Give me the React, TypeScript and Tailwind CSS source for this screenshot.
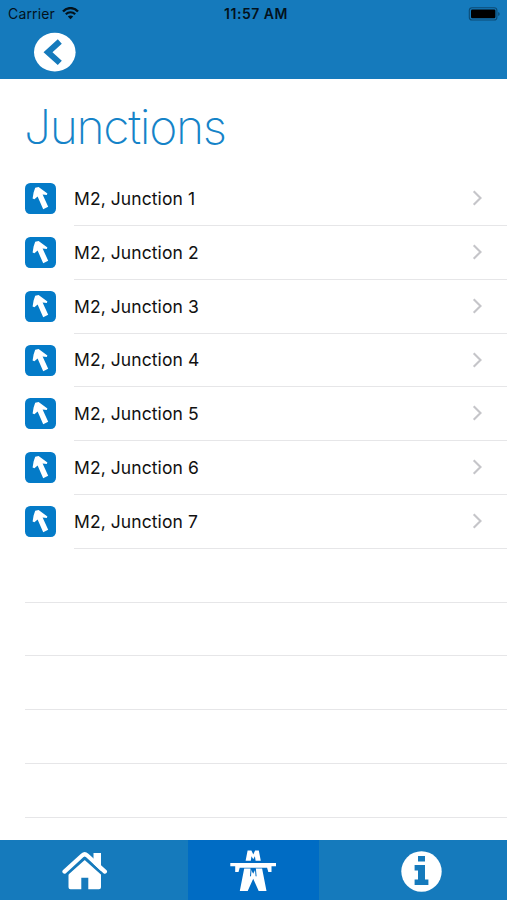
const junctions = [1, 2, 3, 4, 5, 6, 7];
const emptyRows = [1, 2, 3, 4, 5];

function StatusBar() {
  return (
    <div className="flex h-7 items-center pl-2 text-[#03121c]">
      <div className="flex flex-1 items-center">
        <span className="w-[48px] whitespace-nowrap text-[14px] leading-7 tracking-[0.15px]">Carrier</span>
        <svg className="ml-[6px] mt-[-1px]" width="17" height="13" viewBox="0 0 17 13" fill="none" stroke="#03121c">
          <path d="M1 4.5C5-.1 12-.1 16 4.5" strokeWidth="2.3" />
          <path d="M3.8 7.3c2.6-2.8 6.8-2.8 9.4 0" strokeWidth="2.1" />
          <path d="M8.5 12.2 5.8 9.5c1.5-1.4 3.9-1.4 5.4 0z" fill="#03121c" stroke="none" />
        </svg>
      </div>
      <span className="ml-[3px] whitespace-nowrap text-[14px] font-semibold leading-7 tracking-[0.5px]">11:57 AM</span>
      <div className="flex flex-1 justify-end pr-[6px]">
        <svg className="mt-[-1px]" width="33" height="14" viewBox="0 0 33 14">
          <rect x="1.3" y=".8" width="27.6" height="12.2" rx="2.8" fill="none" stroke="#0c4b74" strokeWidth="1.1" />
          <rect x="3" y="2.5" width="24.4" height="8.8" rx="1.2" fill="#000" />
          <path d="M30.2 5v4q1.5-.7 1.5-2t-1.5-2z" fill="#0c4b74" />
        </svg>
      </div>
    </div>
  );
}

function Header() {
  return (
    <header className="h-[79px] shrink-0 bg-[#157abc]">
      <StatusBar />
      <button className="ml-[34px] mt-1 block" aria-label="Back">
        <svg width="42" height="40" viewBox="0 0 42 40">
          <ellipse cx="20.8" cy="20.2" rx="20.8" ry="19.4" fill="#fff" />
          <path d="M25.8 9.6 14 20.2l11.8 10.7" fill="none" stroke="#157abc" strokeWidth="6" />
        </svg>
      </button>
    </header>
  );
}

function JunctionIcon() {
  return (
    <svg className="mr-[18px] shrink-0" width="31" height="31" viewBox="0 0 31 31">
      <rect width="31" height="31" rx="5.2" fill="#047bc8" />
      <path d="M10.2 4.8 13.6 4 22.4 10.4 21.8 12 17.6 11.4 23.2 23.8 18.2 26.2 12.6 13.6 9.4 16.2 7.6 15.6 8.6 9.6z" fill="#fff" />
    </svg>
  );
}

function Chevron() {
  return (
    <svg className="mr-[24px] mt-[-1px]" width="11" height="16" viewBox="0 0 11 16" fill="none">
      <path d="M1.7 1.3 8.5 8l-6.8 6.7" stroke="#c5c5c9" strokeWidth="2.1" />
    </svg>
  );
}

function HomeIcon() {
  return (
    <svg width="46" height="38" viewBox="0 0 46 38" fill="#fff">
      <path d="M31.5 1H39v18l-7.5-7z" />
      <path d="M6.5 21.5 22.7 6.8l16.3 14.7v13.8q0 2-2 2H26.3V25.7h-7v11.6H8.5q-2 0-2-2z" />
      <path d="M4.5 22.6 22.7 6.2l18.2 16.4" fill="none" stroke="#157abc" strokeWidth="2.6" />
      <path d="M2.5 19.6 20.4 3.3q2.3-2 4.6 0l17.9 16.3" fill="none" stroke="#fff" strokeWidth="4.2" strokeLinecap="round" />
    </svg>
  );
}

function MotorwayIcon() {
  return (
    <svg width="46" height="42" viewBox="0 0 46 42" fill="#fff">
      <path d="M17.6.5h3.8l1.9 4 1.8-4h3.7l2 10.2h-5.2l-.7-4.5-1.6 3.1-1.8-3.1-.7 4.5h-5.2z" />
      <path d="M.3 13H46v3.2h-4.5V22h-3.2l-1.2-4.3H9.7L8.5 22H5.2v-5.8H.3z" />
      <path d="M14.2 18.5h6.2l2.8 5.3 2.6-5.3h6.3L36.5 41h-7.8l-5.5-12.3L17.7 41H9.8z" />
      <path d="m21.1 18.7-.6 7.6M25.4 18.7l.7 7.6" fill="none" stroke="#006cc4" strokeWidth="1" />
    </svg>
  );
}

function InfoIcon() {
  return (
    <svg width="41" height="41" viewBox="0 0 41 41">
      <circle cx="20.5" cy="20.5" r="20.2" fill="#fff" />
      <path d="M17 5h7v5.6h-7zM13.6 14H24v14.5h3.4V34H13.6v-5.5H17v-9h-3.4z" fill="#157abc" />
    </svg>
  );
}

export default function App() {
  return (
    <div className="flex h-[900px] w-full flex-col overflow-hidden bg-white font-['Inter',sans-serif]">
      <Header />
      <main className="min-h-0 flex-1 overflow-hidden">
        <h1 className="h-[93.4px] pl-[24px] pt-[22px] text-[48px] font-extralight leading-[52px] tracking-[-1.35px] text-[#1583c8]">
          Junctions
        </h1>
        <ul>
          {junctions.map((n) => (
            <li key={n} className="flex h-[53.77px] pl-[25px]">
              <div className="flex items-center pb-[1px]">
                <JunctionIcon />
              </div>
              <div className="flex flex-1 items-center justify-between border-b border-[#e6e6e8]">
                <span className="pt-[1px] text-[17.5px] tracking-[0.08px] text-[#111]">M2, Junction {n}</span>
                <Chevron />
              </div>
            </li>
          ))}
          {emptyRows.map((n) => (
            <li key={n} className="ml-[25px] h-[53.77px] border-b border-[#e6e6e8]" />
          ))}
        </ul>
      </main>
      <nav className="flex h-[60px] shrink-0 bg-[#157abc]">
        <button className="flex w-[188px] items-center pl-[62px] pt-[2px]" aria-label="Home">
          <HomeIcon />
        </button>
        <button className="flex w-[131px] items-center justify-center bg-[#006cc4] pr-[1px] pt-[2px]" aria-label="Junctions">
          <MotorwayIcon />
        </button>
        <button className="flex flex-1 items-center pl-[82px] pt-[2px]" aria-label="Information">
          <InfoIcon />
        </button>
      </nav>
    </div>
  );
}
